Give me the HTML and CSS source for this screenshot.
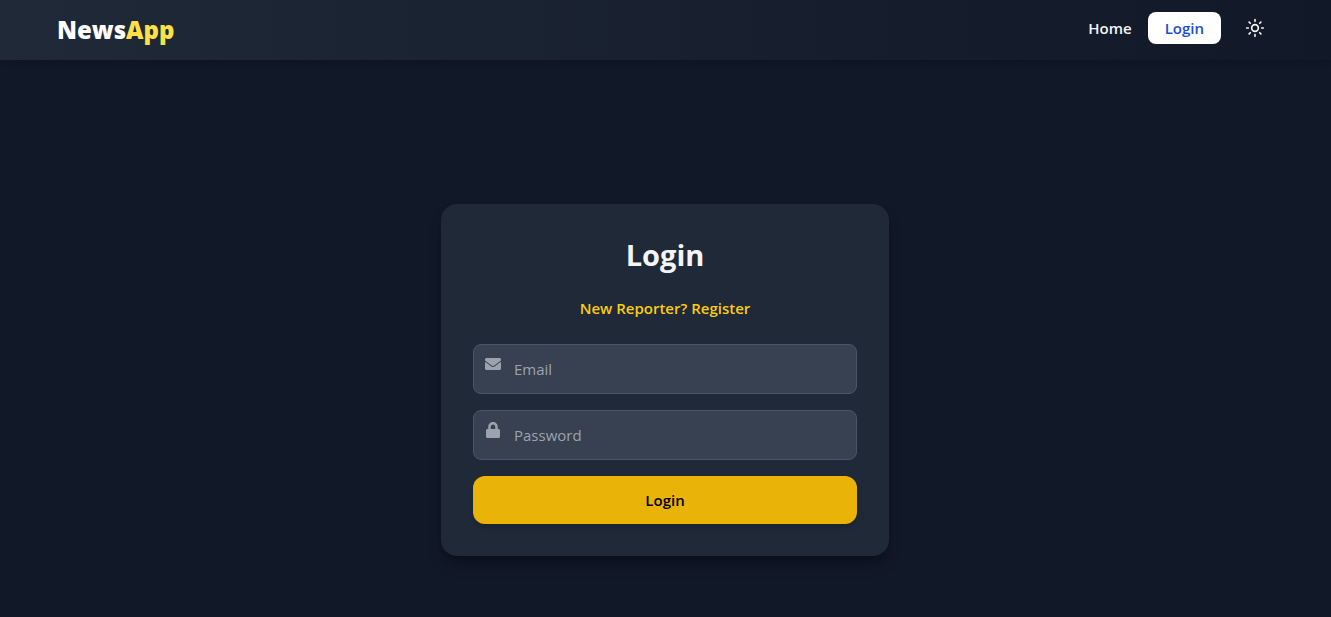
FILE: index.html
```html
<!DOCTYPE html>
<html lang="en">
<head>
<meta charset="utf-8">
<meta name="viewport" content="width=device-width, initial-scale=1">
<title>NewsApp – Login</title>
<link rel="stylesheet" href="styles.css">
</head>
<body>
<header class="navbar">
  <div class="navbar-inner">
    <a class="brand" href="#">News<span class="brand-accent">App</span></a>
    <nav class="nav-links">
      <a class="nav-link" href="#">Home</a>
      <a class="nav-login" href="#">Login</a>
      <button class="theme-toggle" type="button" aria-label="Toggle theme">
        <svg width="20" height="20" viewBox="0 0 24 24" fill="none" stroke="currentColor" stroke-width="2" stroke-linecap="round" stroke-linejoin="round" aria-hidden="true">
          <circle cx="12" cy="12" r="4"/>
          <path d="M12 2v2M12 20v2M4.93 4.93l1.41 1.41M17.66 17.66l1.41 1.41M2 12h2M20 12h2M6.34 17.66l-1.41 1.41M19.07 4.93l-1.41 1.41"/>
        </svg>
      </button>
    </nav>
  </div>
</header>
<main class="page">
  <section class="card">
    <h1 class="card-title">Login</h1>
    <a class="register-link" href="#">New Reporter? Register</a>
    <form class="login-form">
      <div class="field">
        <svg class="field-icon" viewBox="0 0 512 512" fill="currentColor" aria-hidden="true"><path d="M502.3 190.8c3.9-3.1 9.7-.2 9.7 4.7V400c0 26.500-21.500 48-48 48H48c-26.500 0-48-21.500-48-48V195.600c0-5 5.700-7.800 9.700-4.700 22.400 17.400 52.100 39.500 154.100 113.600 21.100 15.400 56.700 47.800 92.200 47.600 35.700.3 72-32.800 92.300-47.600 102-74.100 131.600-96.300 154-113.700zM256 320c23.200.4 56.600-29.200 73.400-41.400 132.700-96.300 142.800-104.700 173.400-128.700 5.800-4.500 9.200-11.500 9.200-18.900v-19c0-26.500-21.500-48-48-48H48c-26.500 0-48 21.500-48 48v19c0 7.400 3.400 14.300 9.200 18.900 30.600 23.900 40.700 32.400 173.400 128.700 16.800 12.200 50.200 41.800 73.400 41.400z"/></svg>
        <input class="field-input" type="email" placeholder="Email" aria-label="Email">
      </div>
      <div class="field">
        <svg class="field-icon" viewBox="0 0 448 512" fill="currentColor" aria-hidden="true"><path d="M400 224h-24v-72C376 68.200 307.800 0 224 0S72 68.200 72 152v72H48c-26.500 0-48 21.500-48 48v192c0 26.500 21.500 48 48 48h352c26.500 0 48-21.500 48-48V272c0-26.500-21.500-48-48-48zm-104 0H152v-72c0-39.700 32.300-72 72-72s72 32.300 72 72v72z"/></svg>
        <input class="field-input" type="password" placeholder="Password" aria-label="Password">
      </div>
      <button class="submit" type="submit">Login</button>
    </form>
  </section>
</main>
</body>
</html>
```

FILE: styles.css
```css
* {
  box-sizing: border-box;
}

body {
  margin: 0;
  min-height: 100vh;
  display: flex;
  flex-direction: column;
  background: #111827;
  color: #f3f4f6;
  font-family: "Open Sans", "Noto Sans", sans-serif;
  font-size: 15px;
  line-height: 24px;
}

a {
  color: inherit;
  text-decoration: none;
}

button,
input {
  font: inherit;
}

.navbar {
  padding-right: 1px;
  background: linear-gradient(to right, #1f2937, #111827);
  box-shadow: 0 4px 6px -1px rgba(0, 0, 0, 0.1), 0 2px 4px -2px rgba(0, 0, 0, 0.1);
}

.navbar-inner {
  max-width: 1280px;
  margin: 0 auto;
  padding: 12px 32px;
  display: flex;
  justify-content: space-between;
  align-items: flex-start;
}

.brand {
  color: #fff;
  font-size: 24px;
  line-height: 36px;
  font-weight: 800;
}

.brand-accent {
  color: #fde047;
}

.nav-links {
  display: flex;
  align-items: center;
  gap: 16px;
  font-weight: 600;
}

.nav-login {
  padding: 4px 17px;
  border-radius: 8px;
  background: #fff;
  color: #1d4ed8;
}

.theme-toggle {
  display: flex;
  padding: 6px 8px;
  border: 0;
  background: none;
  color: #f3f4f6;
  cursor: pointer;
}

.page {
  flex: 1;
  display: flex;
  align-items: center;
  justify-content: center;
  padding: 83px 17px 0 16px;
}

.card {
  width: 100%;
  max-width: 448px;
  padding: 32px;
  border-radius: 16px;
  background: #1f2937;
  box-shadow: 0 10px 15px -3px rgba(0, 0, 0, 0.3), 0 4px 6px -4px rgba(0, 0, 0, 0.3);
  text-align: center;
}

.card-title {
  margin: 0 0 22px;
  font-size: 29px;
  line-height: 38px;
  font-weight: 700;
}

.register-link {
  display: block;
  margin-bottom: 24px;
  color: #facc15;
  font-weight: 600;
}

.login-form {
  display: flex;
  flex-direction: column;
  gap: 16px;
}

.field {
  position: relative;
}

.field-icon {
  position: absolute;
  top: 12px;
  left: 12px;
  width: 16px;
  height: 16px;
  color: #9ca3af;
}

.field-input {
  display: block;
  width: 100%;
  height: 50px;
  padding: 12px 12px 12px 40px;
  border: 1px solid #4b5563;
  border-radius: 8px;
  background: #374151;
  color: #f3f4f6;
}

.field-input::placeholder {
  color: #9ca3af;
  opacity: 1;
}

.submit {
  padding: 12px;
  border: 0;
  border-radius: 12px;
  background: #eab308;
  color: #000;
  font-weight: 600;
  box-shadow: 0 4px 6px -1px rgba(0, 0, 0, 0.1), 0 2px 4px -2px rgba(0, 0, 0, 0.1);
  cursor: pointer;
}
```
